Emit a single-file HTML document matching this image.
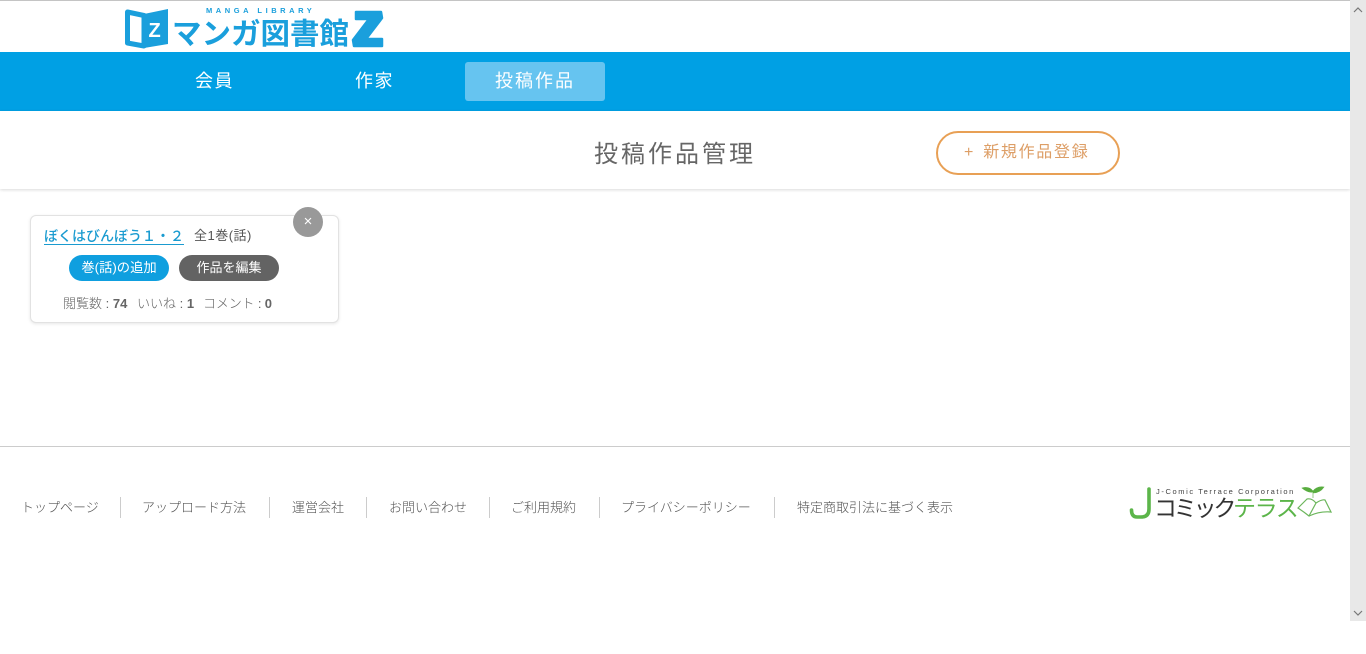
<!DOCTYPE html>
<html lang="ja"><head><meta charset="utf-8"><title>投稿作品管理</title>
<style>
html,body{margin:0;padding:0;background:#fff;overflow:hidden}
body{position:relative;width:1366px;height:654px;font-family:"Liberation Sans","WenQuanYi Zen Hei","Noto Sans CJK JP",sans-serif;color:#666}
.a{position:absolute;white-space:nowrap}
.t{line-height:1}
.cjk{font-family:"Liberation Sans","Noto Sans CJK JP",sans-serif;font-weight:300}
.sep{position:absolute;top:497px;width:1px;height:21px;background:#ccc}
.f{position:absolute;top:500px;font-size:13px;line-height:16px;color:#555;white-space:nowrap;font-family:"Liberation Sans","Noto Sans CJK JP",sans-serif;font-weight:300}
</style></head><body>
<div class="a" style="left:0;top:0;width:1350px;height:1px;background:#c4c4c4"></div>

<!-- logo -->
<svg class="a" style="left:124px;top:6px" width="46" height="44" viewBox="0 0 46 44">
<path d="M3.5 6 L20 9.5 L20 40 L3.5 37 Z" fill="none" stroke="#1a9fdc" stroke-width="5" stroke-linejoin="round"/>
<path d="M20 8 L44 3 L44 38 L20 42 Z" fill="#1a9fdc"/>
<text x="24.5" y="31" font-family="Liberation Sans" font-weight="700" font-size="20" fill="#fff">Z</text>
</svg>
<div class="a t" style="left:172px;top:20px;font-size:29.5px;font-weight:700;color:#1a9fdc;font-family:'Liberation Sans','Noto Sans CJK JP',sans-serif;line-height:30px">マンガ図書館</div>
<div class="a t" style="left:206px;top:6px;font-size:7.5px;font-weight:700;letter-spacing:3.55px;color:#1a9fdc;line-height:9px">MANGA LIBRARY</div>
<svg class="a" style="left:351px;top:8px" width="34" height="41" viewBox="0 0 34 41">
<path d="M5 4 H30 L31 10 L15 31 H31 V38 H3 L2 32 L18 11 H5 Z" fill="#1a9fdc" stroke="#1a9fdc" stroke-width="2.5" stroke-linejoin="round"/>
</svg>

<!-- nav -->
<div class="a" style="left:0;top:52px;width:1350px;height:59px;background:#00a0e4"></div>
<div class="a" style="left:465px;top:62px;width:140px;height:39px;border-radius:3px;background:#66c4f0"></div>
<div class="a cjk" style="left:195px;top:69px;font-size:18px;line-height:24px;color:#fff;letter-spacing:1.5px;font-weight:400">会員</div>
<div class="a cjk" style="left:355px;top:69px;font-size:18px;line-height:24px;color:#fff;letter-spacing:1.5px;font-weight:400">作家</div>
<div class="a cjk" style="left:495px;top:69px;font-size:18px;line-height:24px;color:#fff;letter-spacing:2px;font-weight:400">投稿作品</div>

<!-- title bar -->
<div class="a" style="left:0;top:111px;width:1350px;height:78px;background:#fff;box-shadow:0 1px 3px rgba(0,0,0,.15)"></div>
<div class="a cjk" style="left:594px;top:139px;font-size:24px;line-height:32px;color:#666;letter-spacing:3px;font-weight:400">投稿作品管理</div>
<div class="a" style="left:936px;top:131px;width:180px;height:40px;border:2px solid #e8a055;border-radius:22px;background:#fff"></div>
<div class="a cjk" style="left:964px;top:142px;font-size:16px;line-height:22px;color:#dd9e66;letter-spacing:1.7px;font-weight:400"><span style="margin-right:2px">+</span> 新規作品登録</div>

<!-- card -->
<div class="a" style="left:30px;top:215px;width:307px;height:106px;border:1px solid #e2e2e2;border-radius:6px;background:#fff;box-shadow:0 1px 3px rgba(0,0,0,.1)"></div>
<div class="a" style="left:293px;top:207px;width:30px;height:30px;border-radius:50%;background:#999;color:#fff;font-size:15px;line-height:30px;text-align:center">×</div>
<div class="a" style="left:44px;top:227px;font-size:14px;line-height:18px;color:#1a9bd0;text-decoration:underline;text-underline-offset:3px;font-family:'Liberation Sans','Noto Sans CJK JP',sans-serif;font-weight:500">ぼくはびんぼう１・２</div>
<div class="a cjk" style="left:194px;top:227px;font-size:13px;line-height:18px;color:#555;letter-spacing:.5px;font-weight:400">全1巻(話)</div>
<div class="a cjk" style="left:69px;top:255px;width:100px;height:26px;border-radius:13px;background:#0f9fdf;color:#fff;font-size:13.3px;line-height:25px;text-align:center;font-weight:400">巻(話)の追加</div>
<div class="a cjk" style="left:179px;top:255px;width:100px;height:26px;border-radius:13px;background:#636363;color:#fff;font-size:13px;line-height:25px;text-align:center;font-weight:400">作品を編集</div>
<div class="a cjk" style="left:63px;top:295px;font-size:13px;line-height:17px;color:#666">閲覧数 : <b style="font-weight:700">74</b></div>
<div class="a cjk" style="left:137px;top:295px;font-size:13px;line-height:17px;color:#666">いいね : <b style="font-weight:700">1</b></div>
<div class="a cjk" style="left:203px;top:295px;font-size:13px;line-height:17px;color:#666;letter-spacing:-.15px">コメント : <b style="font-weight:700">0</b></div>

<!-- footer -->
<div class="a" style="left:0;top:446px;width:1350px;height:1px;background:#ccc"></div>
<div class="f" style="left:21px">トップページ</div><div class="sep" style="left:120px"></div>
<div class="f" style="left:142px">アップロード方法</div><div class="sep" style="left:269px"></div>
<div class="f" style="left:292px">運営会社</div><div class="sep" style="left:366px"></div>
<div class="f" style="left:389px">お問い合わせ</div><div class="sep" style="left:489px"></div>
<div class="f" style="left:511px">ご利用規約</div><div class="sep" style="left:599px"></div>
<div class="f" style="left:621px">プライバシーポリシー</div><div class="sep" style="left:774px"></div>
<div class="f" style="left:797px">特定商取引法に基づく表示</div>

<!-- J-comic logo -->
<svg class="a" style="left:1128px;top:484px" width="204" height="38" viewBox="0 0 204 38">
<path d="M21 5 V25 Q21 33 13 33 H9 Q3.5 33 3.5 26" fill="none" stroke="#5cb54a" stroke-width="3.6" stroke-linecap="round"/>
<path d="M170 24 L179 15 Q184 14 188 19 L181 32 Q176 28 170 24 Z" fill="none" stroke="#6cb65c" stroke-width="1.2"/>
<path d="M188 19 Q194 15 197 16 L203 28 Q192 27 181 32" fill="none" stroke="#6cb65c" stroke-width="1.2"/>
<path d="M185 14 V8 Q180 9 174 4 Q181 2 185 7 Q189 2 196 3 Q192 9 185 9" fill="#58ad3f" stroke="#58ad3f" stroke-width=".6"/>
</svg>
<div class="a" style="left:1156px;top:487px;font-size:7.5px;line-height:9px;letter-spacing:1.6px;color:#444">J-Comic Terrace Corporation</div>
<div class="a cjk" style="left:1154px;top:494px;font-size:23px;line-height:28px;color:#333;letter-spacing:-3.2px;font-weight:400">コミック</div>
<div class="a cjk" style="left:1233px;top:494px;font-size:23px;line-height:28px;color:#5cb54a;letter-spacing:-1.4px;font-weight:400">テラス</div>

<!-- scrollbar -->
<div class="a" style="left:1350px;top:0;width:16px;height:621px;background:#e8e8e8"></div>
<svg class="a" style="left:1350px;top:5px" width="16" height="10"><path d="M4 7 L8 3 L12 7" fill="none" stroke="#777" stroke-width="1.2"/></svg>
<svg class="a" style="left:1350px;top:608px" width="16" height="10"><path d="M4 3 L8 7 L12 3" fill="none" stroke="#777" stroke-width="1.2"/></svg>
</body></html>
